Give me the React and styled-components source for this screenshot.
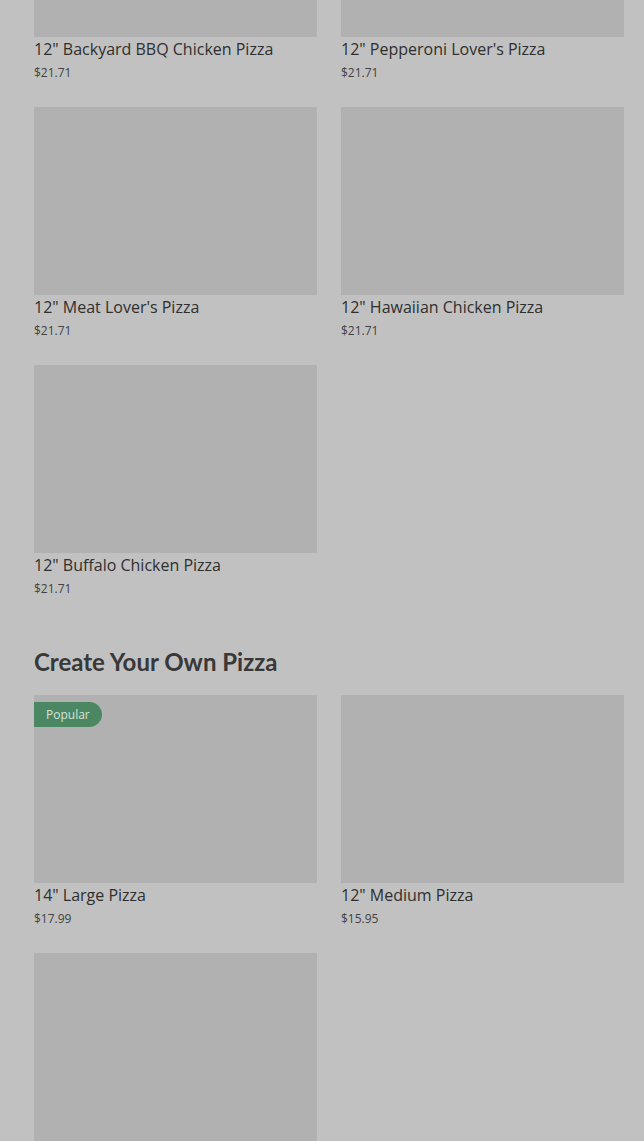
import React from "react";
import styled, { createGlobalStyle } from "styled-components";

const GlobalStyle = createGlobalStyle`
  html, body {
    margin: 0;
    padding: 0;
    background: #c1c1c1;
    overflow: hidden;
  }
  body {
    font-family: "Open Sans", "Noto Sans", sans-serif;
    color: #3a3a3a;
  }
`;

const pizzas = [
  { name: '12" Backyard BBQ Chicken Pizza', price: "$21.71" },
  { name: '12" Pepperoni Lover\'s Pizza', price: "$21.71" },
  { name: '12" Meat Lover\'s Pizza', price: "$21.71" },
  { name: '12" Hawaiian Chicken Pizza', price: "$21.71" },
  { name: '12" Buffalo Chicken Pizza', price: "$21.71" },
];

const custom = [
  { name: '14" Large Pizza', price: "$17.99", popular: true },
  { name: '12" Medium Pizza', price: "$15.95" },
  { name: "", price: "" },
];

function Card({ name, price, popular }) {
  return (
    <Item>
      <Photo>{popular && <Badge>Popular</Badge>}</Photo>
      {name && <Name>{name}</Name>}
      {price && <Price>{price}</Price>}
    </Item>
  );
}

export default function App() {
  return (
    <>
      <GlobalStyle />
      <Page>
        <Grid>
          {pizzas.map((p) => (
            <Card key={p.name} {...p} />
          ))}
        </Grid>
        <Heading>Create Your Own Pizza</Heading>
        <Grid>
          {custom.map((p, i) => (
            <Card key={i} {...p} />
          ))}
        </Grid>
      </Page>
    </>
  );
}

const Page = styled.main`
  margin-top: -151px;
  padding: 0 20px 40px 34px;
`;

const Grid = styled.div`
  display: grid;
  grid-template-columns: 283px 283px;
  column-gap: 24px;
  row-gap: 26px;
`;

const Item = styled.div`
  display: flex;
  flex-direction: column;
`;

const Photo = styled.div`
  position: relative;
  height: 188px;
  background: #b1b1b1;
`;

const Badge = styled.span`
  position: absolute;
  top: 7px;
  left: 0;
  height: 25px;
  padding: 0 12px;
  display: flex;
  align-items: center;
  background: #4b8763;
  color: #d6e3dc;
  font-size: 12px;
  border-radius: 0 13px 13px 0;
`;

const Name = styled.div`
  margin-top: 2px;
  font-size: 16px;
  line-height: 21px;
  font-weight: 500;
  color: #2f2f2f;
`;

const Price = styled.div`
  margin-top: 5px;
  font-size: 12px;
  line-height: 16px;
  color: #424242;
`;

const Heading = styled.h2`
  margin: 50px 0 18px;
  font-family: "Lato", sans-serif;
  font-size: 24px;
  line-height: 30px;
  font-weight: 700;
  color: #383838;
`;
